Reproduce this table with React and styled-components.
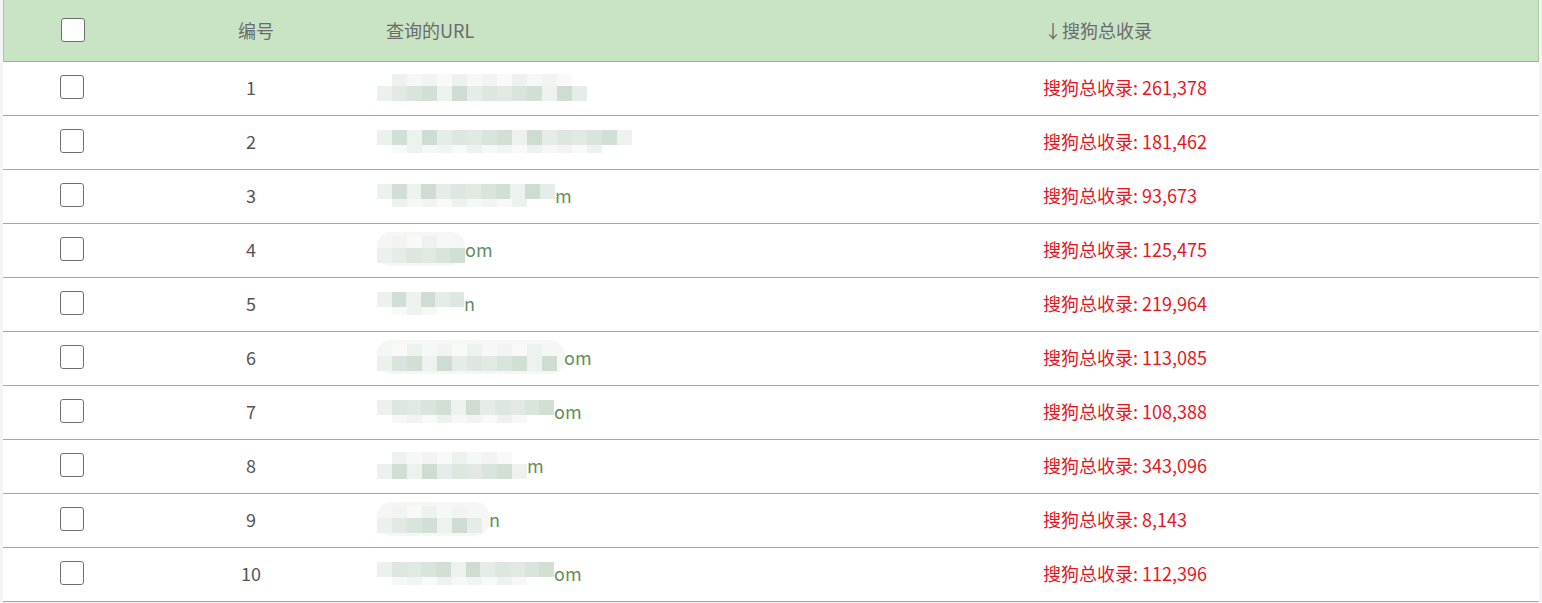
import React from "react";
import styled, { createGlobalStyle } from "styled-components";

const GlobalStyle = createGlobalStyle`
  html, body {
    margin: 0;
    padding: 0;
    background: #f4f4f7;
    font-family: "Noto Sans CJK SC", "Noto Sans", sans-serif;
  }
`;

const Page = styled.div`
  padding: 0 3px;
  height: 603px;
  overflow: hidden;
`;

const Table = styled.div`
  background: #fff;
  width: 1536px;
`;

const Row = styled.div`
  display: grid;
  grid-template-columns: 137px 222px 678px 1fr;
  align-items: center;
  box-sizing: border-box;
  height: ${(p) => (p.head ? "62px" : "54px")};
  padding-bottom: ${(p) => (p.head ? "2px" : "3px")};
  background: ${(p) => (p.head ? "#c8e4c5" : "#fff")};
  border-bottom: 1px solid ${(p) => (p.head ? "#8fb98a" : "#86c07e")};
  border-left: ${(p) => (p.head ? "1px solid #a8c9a4" : "none")};
  border-right: ${(p) => (p.head ? "1px solid #a8c9a4" : "none")};
  font-size: 18px;
`;

const CheckCell = styled.div`
  display: flex;
  justify-content: center;
  padding-left: 1px;
`;

const Box = styled.span`
  display: block;
  width: 22px;
  height: 22px;
  border: 1.5px solid #6f6f6f;
  border-radius: 3px;
  background: #fff;
`;

const NumCell = styled.div`
  text-align: center;
  color: ${(p) => (p.head ? "#6b6b6b" : "#555")};
  padding-left: ${(p) => (p.head ? "8px" : "0")};
`;

const UrlCell = styled.div`
  display: flex;
  align-items: center;
  padding-left: ${(p) => (p.head ? "23px" : "15px")};
  color: ${(p) => (p.head ? "#6b6b6b" : "#5f8f5c")};
`;

const TotalCell = styled.div`
  padding-left: 3px;
  color: ${(p) => (p.head ? "#6b6b6b" : "#e8151f")};
`;

const Mosaic = styled.div`
  display: flex;
  flex-direction: column;
  justify-content: center;
  height: 34px;
  width: ${(p) => p.w}px;
  border-radius: 14px;
  background: ${(p) => (p.blob ? "#f4f7f4" : "transparent")};
  filter: blur(0.6px);
`;

const Strip = styled.div`
  display: flex;
  height: ${(p) => p.h}px;
  margin-left: ${(p) => p.inset || 0}px;
`;

const Cell = styled.span`
  display: block;
  width: 15px;
  height: 100%;
  background: ${(p) => p.c};
`;

const shades = ["#dde7e0", "#d2dfd5", "#e6ece7", "#d9e4dc", "#cfdcd2", "#e2e9e3", "#eef2ee"];
const faint = ["#f1f4f1", "#f6f8f6", "#eef2ef", "#f8f9f8"];

function Blur({ w, blob, top }) {
  const n = Math.max(2, Math.round(w / 15));
  const cells = Array.from({ length: n }, (_, i) => shades[(i * 5 + w) % shades.length]);
  const tops = Array.from({ length: n }, (_, i) => faint[(i * 3 + w) % faint.length]);
  return (
    <Mosaic w={w} blob={blob}>
      {top && (
        <Strip h={12} inset={15}>
          {tops.slice(0, n - 2).map((c, i) => (
            <Cell key={i} c={c} />
          ))}
        </Strip>
      )}
      <Strip h={15}>
        <Cell c="#edf1ee" />
        {cells.slice(1).map((c, i) => (
          <Cell key={i} c={c} />
        ))}
      </Strip>
      {!top && (
        <Strip h={8} inset={15}>
          {tops.slice(0, n - 3).map((c, i) => (
            <Cell key={i} c={c} />
          ))}
        </Strip>
      )}
    </Mosaic>
  );
}

const rows = [
  { id: 1, w: 210, tail: "", top: true, count: "261,378" },
  { id: 2, w: 255, tail: "", count: "181,462" },
  { id: 3, w: 178, tail: "m", count: "93,673" },
  { id: 4, w: 88, tail: "om", blob: true, top: true, count: "125,475" },
  { id: 5, w: 87, tail: "n", count: "219,964" },
  { id: 6, w: 187, tail: "om", blob: true, top: true, count: "113,085" },
  { id: 7, w: 177, tail: "om", count: "108,388" },
  { id: 8, w: 150, tail: "m", top: true, count: "343,096" },
  { id: 9, w: 112, tail: "n", blob: true, top: true, count: "8,143" },
  { id: 10, w: 177, tail: "om", count: "112,396" },
];

export default function App() {
  return (
    <>
      <GlobalStyle />
      <Page>
        <Table>
          <Row head>
            <CheckCell>
              <Box />
            </CheckCell>
            <NumCell head>编号</NumCell>
            <UrlCell head>查询的URL</UrlCell>
            <TotalCell head>↓搜狗总收录</TotalCell>
          </Row>
          {rows.map((r) => (
            <Row key={r.id}>
              <CheckCell>
                <Box />
              </CheckCell>
              <NumCell>{r.id}</NumCell>
              <UrlCell>
                <Blur w={r.w} blob={r.blob} top={r.top} />
                {r.tail}
              </UrlCell>
              <TotalCell>搜狗总收录: {r.count}</TotalCell>
            </Row>
          ))}
        </Table>
      </Page>
    </>
  );
}
